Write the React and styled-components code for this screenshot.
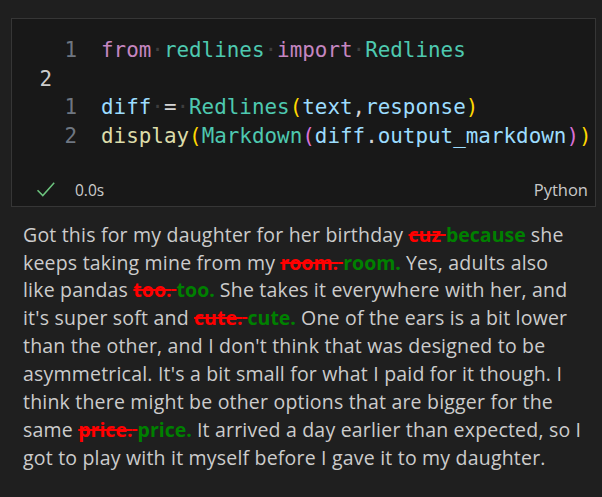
import React from 'react';
import styled, { createGlobalStyle } from 'styled-components';

const GlobalStyle = createGlobalStyle`
  html, body {
    margin: 0;
    padding: 0;
    background: #1f1f1f;
  }
`;

const Page = styled.div`
  display: flex;
  flex-direction: column;
  padding-top: 18px;
  width: 602px;
  height: 497px;
  box-sizing: border-box;
  background: #1f1f1f;
`;

const Cell = styled.div`
  margin: 0 6px 0 11px;
  border: 1px solid #363636;
  background: #181818;
`;

const Editor = styled.div`
  padding-top: 17px;
  font-family: "DejaVu Sans Mono", monospace;
  font-size: 20.9px;
  line-height: 28.7px;
  white-space: pre;
`;

const Row = styled.div`
  display: flex;
  height: 28.7px;
`;

const LineNo = styled.span`
  width: ${p => (p.$cell ? '40px' : '65px')};
  text-align: right;
  color: ${p => (p.$cell ? '#cccccc' : '#6e7681')};
`;

const Code = styled.span`
  margin-left: 24px;
  color: #d4d4d4;
`;

const Tok = styled.span`
  color: ${p => p.$c};
`;

const Dot = styled.span`
  color: #3e3e3e;
`;

const Footer = styled.div`
  display: flex;
  align-items: center;
  height: 24px;
  margin-top: 27px;
  padding: 0 7px 4px 25px;
  font-family: "Open Sans", sans-serif;
  color: #cccccc;
`;

const Time = styled.span`
  margin-left: 20px;
  font-size: 15.5px;
`;

const Lang = styled.span`
  margin-left: auto;
  font-size: 16.5px;
  color: #c8c8c8;
`;

const Output = styled.p`
  margin: 14px 0 0;
  padding: 0 20px 0 23px;
  font-family: "Open Sans", sans-serif;
  font-size: 19.5px;
  letter-spacing: 0.2px;
  line-height: 27.85px;
  color: #cccccc;
`;

const Del = styled.span`
  color: #ff0000;
  font-weight: 700;
  letter-spacing: 0;
  text-decoration: line-through;
  text-decoration-thickness: 2px;
`;

const Ins = styled.span`
  color: #008000;
  font-weight: 700;
  letter-spacing: 0;
`;

const C = {
  kw: '#c586c0',
  cls: '#4ec9b0',
  v: '#9cdcfe',
  fn: '#dcdcaa',
  p1: '#ffd700',
  p2: '#da70d6',
  op: '#d4d4d4',
};

function Check() {
  return (
    <svg width="18" height="15" viewBox="0 0 18 15" fill="none">
      <path d="M0.5 8.2 L5.8 13.6 L17.2 0.8" stroke="#6cc47e" strokeWidth="1.5" />
    </svg>
  );
}

const Edit = ({ old, fresh }) => (
  <>
    <Del>{old} </Del>
    <Ins>{fresh} </Ins>
  </>
);

export default function App() {
  return (
    <Page>
      <GlobalStyle />
      <Cell>
        <Editor>
          <Row>
            <LineNo>1</LineNo>
            <Code>
              <Tok $c={C.kw}>from</Tok><Dot>·</Dot>
              <Tok $c={C.cls}>redlines</Tok><Dot>·</Dot>
              <Tok $c={C.kw}>import</Tok><Dot>·</Dot>
              <Tok $c={C.cls}>Redlines</Tok>
            </Code>
          </Row>
          <Row>
            <LineNo $cell>2</LineNo>
          </Row>
          <Row>
            <LineNo>1</LineNo>
            <Code>
              <Tok $c={C.v}>diff</Tok><Dot>·</Dot>
              <Tok $c={C.op}>=</Tok><Dot>·</Dot>
              <Tok $c={C.cls}>Redlines</Tok>
              <Tok $c={C.p1}>(</Tok>
              <Tok $c={C.v}>text</Tok>,
              <Tok $c={C.v}>response</Tok>
              <Tok $c={C.p1}>)</Tok>
            </Code>
          </Row>
          <Row>
            <LineNo>2</LineNo>
            <Code>
              <Tok $c={C.fn}>display</Tok>
              <Tok $c={C.p1}>(</Tok>
              <Tok $c={C.cls}>Markdown</Tok>
              <Tok $c={C.p2}>(</Tok>
              <Tok $c={C.v}>diff</Tok>.
              <Tok $c={C.v}>output_markdown</Tok>
              <Tok $c={C.p2}>)</Tok>
              <Tok $c={C.p1}>)</Tok>
            </Code>
          </Row>
        </Editor>
        <Footer>
          <Check />
          <Time>0.0s</Time>
          <Lang>Python</Lang>
        </Footer>
      </Cell>
      <Output>
        Got this for my daughter for her birthday <Edit old="cuz" fresh="because" />she
        keeps taking mine from my <Edit old="room." fresh="room." />Yes, adults also
        like pandas <Edit old="too." fresh="too." />She takes it everywhere with her, and
        it's super soft and <Edit old="cute." fresh="cute." />One of the ears is a bit lower
        than the other, and I don't think that was designed to be asymmetrical. It's a bit
        small for what I paid for it though. I think there might be other options that are
        bigger for the same <Edit old="price." fresh="price." />It arrived a day earlier than
        expected, so I got to play with it myself before I gave it to my daughter.
      </Output>
    </Page>
  );
}
